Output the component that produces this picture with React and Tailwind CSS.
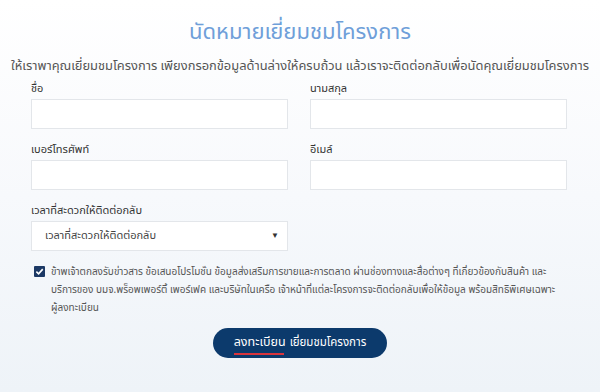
import React from "react";

const font = { fontFamily: '"Noto Sans Thai", "Noto Sans", "Liberation Sans", sans-serif' };

function Field({ label }) {
  return (
    <div className="flex flex-col">
      <label className="text-[11px] leading-[14px] text-[#333] h-[17px]">{label}</label>
      <input className="h-[30px] w-full border border-[#e3e6ea] bg-white outline-none" />
    </div>
  );
}

export default function App() {
  return (
    <div
      className="w-[600px] h-[392px] overflow-hidden bg-gradient-to-b from-white via-[#f7f9fc] to-[#eef3f8]"
      style={font}
    >
      <div className="pt-[18px] flex flex-col items-center">
        <h1 className="text-[22px] leading-[30px] text-[#6f9fd9] font-normal">นัดหมายเยี่ยมชมโครงการ</h1>
        <p className="mt-[10px] text-[12.9px] leading-[16px] text-[#555] whitespace-nowrap">
          ให้เราพาคุณเยี่ยมชมโครงการ เพียงกรอกข้อมูลด้านล่างให้ครบถ้วน แล้วเราจะติดต่อกลับเพื่อนัดคุณเยี่ยมชมโครงการ
        </p>
      </div>
      <div className="mx-[31px] mt-[8px] w-[536px]">
        <div className="grid grid-cols-2 gap-x-[22px] gap-y-[14px]">
          <Field label="ชื่อ" />
          <Field label="นามสกุล" />
          <Field label="เบอร์โทรศัพท์" />
          <Field label="อีเมล์" />
        </div>
        <div className="mt-[14px] w-[257px]">
          <label className="block text-[11px] leading-[14px] text-[#333] h-[17px]">เวลาที่สะดวกให้ติดต่อกลับ</label>
          <div className="h-[30px] border border-[#e3e6ea] bg-white flex items-center justify-between pl-[13px] pr-[8px]">
            <span className="text-[11px] text-[#444]">เวลาที่สะดวกให้ติดต่อกลับ</span>
            <span className="text-[8px] text-[#333]">▼</span>
          </div>
        </div>
        <div className="mt-[12px] flex gap-[6px] pl-[3px]">
          <div className="mt-[3px] w-[11px] h-[11px] shrink-0 bg-[#1c3965] flex items-center justify-center rounded-[1px]">
            <svg width="9" height="9" viewBox="0 0 10 10">
              <path d="M1.5 5.2 L4 7.6 L8.6 2.4" stroke="white" strokeWidth="1.8" fill="none" />
            </svg>
          </div>
          <p className="text-[10px] leading-[18px] text-[#555] whitespace-nowrap">
            ข้าพเจ้าตกลงรับข่าวสาร ข้อเสนอโปรโมชั่น ข้อมูลส่งเสริมการขายและการตลาด ผ่านช่องทางและสื่อต่างๆ ที่เกี่ยวข้องกับสินค้า และ
            <br />
            บริการของ บมจ.พร็อพเพอร์ตี้ เพอร์เฟค และบริษัทในเครือ เจ้าหน้าที่แต่ละโครงการจะติดต่อกลับเพื่อให้ข้อมูล พร้อมสิทธิพิเศษเฉพาะ
            <br />
            ผู้ลงทะเบียน
          </p>
        </div>
      </div>
      <div className="mt-[11px] flex justify-center">
        <button className="w-[174px] h-[30px] rounded-full bg-[#0c3a6c] text-white text-[11.5px] flex items-center justify-center">
          <span className="relative">
            <span className="text-[12.5px]">ลงทะเบียน</span>
            <span className="absolute left-0 top-[19px] w-[50px] h-[2px] bg-[#d9343c]" />
          </span>
          <span className="ml-[4px]">เยี่ยมชมโครงการ</span>
        </button>
      </div>
    </div>
  );
}
